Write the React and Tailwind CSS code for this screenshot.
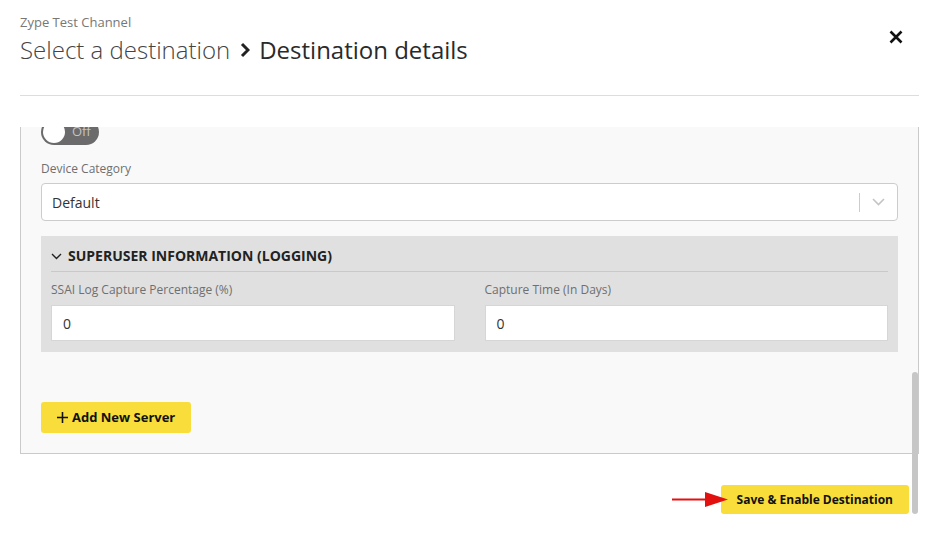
import { useState } from "react";

function Toggle({ on }) {
  return (
    <div className="relative w-[58px] h-[26px] rounded-full bg-[#6b6b6b] flex items-center">
      <div className="absolute left-[2px] top-[2px] w-[22px] h-[22px] rounded-full bg-white" />
      <span className="ml-[31px] text-[13px] text-[#c4c4c4]">{on ? "On" : "Off"}</span>
    </div>
  );
}

function Field({ label, value }) {
  return (
    <div>
      <label className="block text-[12px] leading-[16px] text-[#6f6f6f]">{label}</label>
      <div className="mt-[7px] h-[36px] bg-white border border-[#d6d6d6] flex items-center px-[11px] text-[14px] text-[#333]">
        {value}
      </div>
    </div>
  );
}

export default function App() {
  const [category] = useState("Default");

  return (
    <div className="relative w-[939px] h-[533px] bg-white overflow-hidden font-['Open_Sans',sans-serif] text-[#333]">
      {/* header */}
      <div className="flex items-start justify-between pl-5 pr-[36px] pt-[13px]">
        <div>
          <p className="text-[13px] leading-[18px] text-[#777]">Zype Test Channel</p>
          <h1 className="mt-[3px] flex items-center text-[24px] leading-[32px]">
            <span className="font-light text-[#444]">Select a destination</span>
            <svg className="ml-[10px] mr-[9px]" width="10" height="16" viewBox="0 0 10 16">
              <path d="M2 2l6 6-6 6" fill="none" stroke="#222" strokeWidth="3" />
            </svg>
            <span className="text-[#2a2a2a]">Destination details</span>
          </h1>
        </div>
        <button className="mt-[17px]">
          <svg width="14" height="14" viewBox="0 0 14 14">
            <path d="M1.5 1.5l11 11M12.5 1.5l-11 11" stroke="#111" strokeWidth="2.6" />
          </svg>
        </button>
      </div>

      <div className="mx-5 mt-[29px] border-t border-[#ddd]" />

      {/* scrolled panel */}
      <div className="mx-5 mt-[31px] h-[328px] overflow-hidden">
        <div className="-mt-2 bg-[#f9f9f9] border-x border-b border-[#cacaca] px-5 pb-5">
          <Toggle on={false} />

          <label className="mt-4 block text-[12px] leading-[16px] text-[#6f6f6f]">Device Category</label>
          <div className="mt-[6px] h-[38px] bg-white border border-[#cccccc] rounded-[4px] flex items-center">
            <span className="flex-1 pl-[10px] text-[14px] text-[#333]">{category}</span>
            <div className="w-px h-[19px] bg-[#cccccc]" />
            <svg className="mx-[12px]" width="13" height="8" viewBox="0 0 13 8">
              <path d="M1 1l5.5 5.5L12 1" fill="none" stroke="#c4c4c4" strokeWidth="1.6" />
            </svg>
          </div>

          <div className="mt-[15px] bg-[#e0e0e0] px-[10px] pt-[10px] pb-[11px]">
            <div className="flex items-center gap-[6px] pb-[5px] border-b border-[#c9c9c9]">
              <svg width="11" height="7" viewBox="0 0 11 7">
                <path d="M1 1l4.5 4.5L10 1" fill="none" stroke="#222" strokeWidth="1.4" />
              </svg>
              <span className="text-[14px] leading-[20px] font-bold text-[#222]">
                SUPERUSER INFORMATION (LOGGING)
              </span>
            </div>
            <div className="mt-[10px] grid grid-cols-2 gap-[30px]">
              <Field label="SSAI Log Capture Percentage (%)" value="0" />
              <Field label="Capture Time (In Days)" value="0" />
            </div>
          </div>

          <button className="mt-[50px] h-[31px] px-[16px] rounded-[3px] bg-[#f9de3b] flex items-center gap-[4px] text-[13px] font-bold text-[#111]">
            <svg width="11" height="11" viewBox="0 0 11 11">
              <path d="M5.5 0v11M0 5.5h11" stroke="#111" strokeWidth="1.6" />
            </svg>
            Add New Server
          </button>
        </div>
      </div>

      {/* footer */}
      <div className="mt-[30px] flex justify-end pr-[30px]">
        <button className="h-[29px] px-[16px] rounded-[3px] bg-[#f9de3b] text-[12px] font-bold text-[#111]">
          Save &amp; Enable Destination
        </button>
      </div>

      {/* annotation arrow */}
      <svg className="absolute left-[672px] top-[491px]" width="57" height="17" viewBox="0 0 57 17">
        <path d="M0 8.5h36" stroke="#e31010" strokeWidth="2" />
        <path d="M33 1l23 7.5-23 7.5z" fill="#e31010" />
      </svg>

      {/* scrollbar */}
      <div className="absolute left-[912px] top-[372px] w-[6px] h-[142px] rounded-full bg-[#c6c6c6]" />
    </div>
  );
}
